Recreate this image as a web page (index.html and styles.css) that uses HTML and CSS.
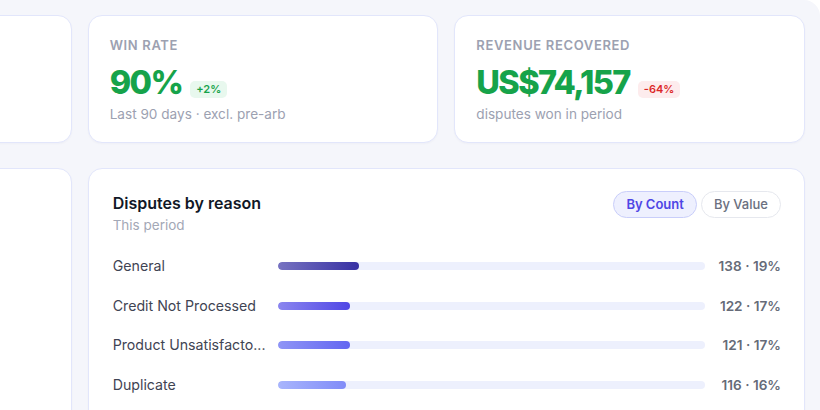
FILE: index.html
```html
<!DOCTYPE html>
<html lang="en">
<head>
<meta charset="utf-8">
<title>Disputes overview</title>
<link rel="stylesheet" href="styles.css">
</head>
<body>
<main class="board">
  <section class="kpis">
    <article class="card kpi"></article>
    <article class="card kpi">
      <div class="kpi-label">Win rate</div>
      <div class="kpi-value-row">
        <span class="kpi-value">90%</span>
        <span class="delta delta-up">+2%</span>
      </div>
      <div class="kpi-sub">Last 90 days · excl. pre-arb</div>
    </article>
    <article class="card kpi">
      <div class="kpi-label">Revenue recovered</div>
      <div class="kpi-value-row">
        <span class="kpi-value">US$74,157</span>
        <span class="delta delta-down">-64%</span>
      </div>
      <div class="kpi-sub">disputes won in period</div>
    </article>
  </section>

  <section class="panels">
    <article class="card panel-side"></article>
    <article class="card panel-reasons">
      <header class="panel-head">
        <div>
          <h2 class="panel-title">Disputes by reason</h2>
          <p class="panel-sub">This period</p>
        </div>
        <div class="toggle">
          <button class="toggle-btn is-active" type="button">By Count</button>
          <button class="toggle-btn" type="button">By Value</button>
        </div>
      </header>
      <ul class="reasons">
        <li class="reason">
          <span class="reason-name">General</span>
          <span class="track"><span class="fill fill-1" style="width:19%"></span></span>
          <span class="reason-value">138 · 19%</span>
        </li>
        <li class="reason">
          <span class="reason-name">Credit Not Processed</span>
          <span class="track"><span class="fill fill-2" style="width:17%"></span></span>
          <span class="reason-value">122 · 17%</span>
        </li>
        <li class="reason">
          <span class="reason-name" title="Product Unsatisfactory">Product Unsatisfacto...</span>
          <span class="track"><span class="fill fill-3" style="width:17%"></span></span>
          <span class="reason-value">121 · 17%</span>
        </li>
        <li class="reason">
          <span class="reason-name">Duplicate</span>
          <span class="track"><span class="fill fill-4" style="width:16%"></span></span>
          <span class="reason-value">116 · 16%</span>
        </li>
      </ul>
    </article>
  </section>
</main>
</body>
</html>
```

FILE: styles.css
```css
* {
  box-sizing: border-box;
}

html,
body {
  margin: 0;
  height: 100%;
  overflow: hidden;
  background: #ffffff;
  font-family: Inter, "Noto Sans", "Liberation Sans", sans-serif;
  color: #111827;
}

.board {
  width: 1114px;
  margin-left: -294px;
  padding: 15px 15px 40px;
  background: #f5f6fb;
  border-radius: 0 16px 16px 0;
  min-height: 460px;
}

.card {
  background: #ffffff;
  border: 1px solid #e2e6fb;
  border-radius: 14px;
  box-shadow: 0 1px 2px rgba(30, 41, 90, 0.03);
}

/* KPI row */
.kpis {
  display: grid;
  grid-template-columns: repeat(3, 1fr);
  gap: 16px;
}

.kpi {
  height: 128px;
  padding: 21px 21px 20px;
}

.kpi-label {
  font-size: 13px;
  line-height: 16px;
  font-weight: 600;
  letter-spacing: 0.05em;
  text-transform: uppercase;
  color: #9ca1b1;
}

.kpi-value-row {
  display: flex;
  align-items: flex-end;
  gap: 8px;
  margin-top: 12px;
}

.kpi-value {
  font-size: 32.5px;
  line-height: 36px;
  font-weight: 800;
  letter-spacing: -0.05em;
  color: #16a34a;
}

.delta {
  font-size: 11px;
  line-height: 17px;
  font-weight: 600;
  padding: 0 6px;
  border-radius: 5px;
  margin-bottom: 3px;
}

.delta-up {
  background: #e8f8ee;
  color: #16a34a;
}

.delta-down {
  background: #fdeced;
  color: #dc2626;
}

.kpi-sub {
  margin-top: 4px;
  font-size: 13.6px;
  line-height: 18px;
  color: #9ca1b1;
}

/* Panels row */
.panels {
  display: grid;
  grid-template-columns: repeat(3, 1fr);
  gap: 16px;
  margin-top: 25px;
}

.panel-side {
  min-height: 300px;
}

.panel-reasons {
  grid-column: span 2;
  padding: 23px 23px 30px 24px;
  min-height: 300px;
}

.panel-head {
  display: flex;
  justify-content: space-between;
  align-items: flex-start;
}

.panel-title {
  margin: 0;
  font-size: 16px;
  line-height: 22px;
  font-weight: 600;
  color: #111827;
}

.panel-sub {
  margin: 2px 0 0;
  font-size: 13.5px;
  line-height: 18px;
  color: #a3a8b6;
}

.toggle {
  display: flex;
  gap: 4px;
  margin-top: -1px;
}

.toggle-btn {
  font-family: inherit;
  font-size: 13px;
  line-height: 25px;
  height: 27px;
  padding: 0 12px;
  border-radius: 14px;
  border: 1px solid #e6e8ee;
  background: #ffffff;
  color: #6b7080;
  font-weight: 500;
  cursor: pointer;
}

.toggle-btn.is-active {
  background: #eef0fe;
  border-color: #c9cefa;
  color: #4f46e5;
  font-weight: 600;
}

/* Reason bars */
.reasons {
  list-style: none;
  margin: 22px 0 0;
  padding: 0;
  display: flex;
  flex-direction: column;
  gap: 19.7px;
}

.reason {
  display: grid;
  grid-template-columns: 155px 1fr 66px;
  column-gap: 10px;
  align-items: center;
  height: 20px;
}

.reason-name {
  font-size: 14.2px;
  line-height: 20px;
  color: #3f4453;
  white-space: nowrap;
  overflow: hidden;
}

.track {
  display: block;
  height: 8px;
  border-radius: 4px;
  background: #edf0fd;
  overflow: hidden;
}

.fill {
  display: block;
  height: 100%;
  border-radius: 4px;
}

.fill-1 {
  background: linear-gradient(90deg, #7773c1, #3730a3);
}

.fill-2 {
  background: linear-gradient(90deg, #8b86ef, #4f46e5);
}

.fill-3 {
  background: linear-gradient(90deg, #8f95f6, #6366f1);
}

.fill-4 {
  background: linear-gradient(90deg, #a8b5fc, #818cf8);
}

.reason-value {
  text-align: right;
  font-size: 13.6px;
  line-height: 20px;
  font-weight: 600;
  color: #666b78;
  white-space: nowrap;
}
```
